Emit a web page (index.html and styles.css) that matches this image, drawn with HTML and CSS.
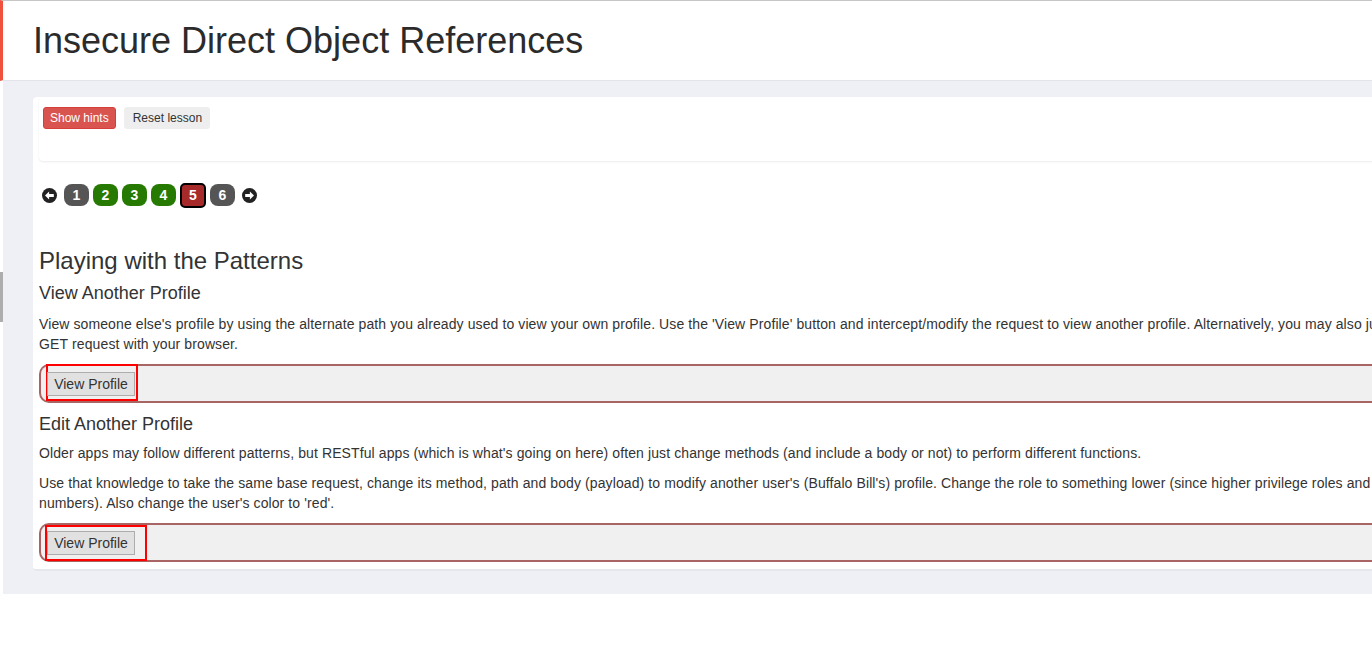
FILE: index.html
```html
<!DOCTYPE html>
<html lang="en">
<head>
    <meta charset="UTF-8">
    <title>Insecure Direct Object References</title>
    <link rel="stylesheet" href="styles.css">
</head>
<body>
    <div class="page">
        <!-- Lesson title -->
        <header class="lesson-header">
            <h1>Insecure Direct Object References</h1>
        </header>

        <div class="main">
            <div class="side">
                <span class="side-tab"></span>
            </div>

            <div class="content">
                <div class="lesson-card">
                    <div class="lesson-menu">
                        <button class="btn btn-hints">Show hints</button>
                        <button class="btn btn-reset">Reset lesson</button>
                    </div>

                    <!-- Page navigation -->
                    <div class="pager">
                        <span class="pager-arrow">
                            <svg viewBox="0 0 16 16" width="15" height="15">
                                <circle cx="8" cy="8" r="8" fill="#222"/>
                                <path d="M3.2 8 L7.6 3.8 L7.6 6.4 L12.6 6.4 L12.6 9.6 L7.6 9.6 L7.6 12.2 Z" fill="#fff"/>
                            </svg>
                        </span>
                        <span class="page-link done-no">1</span>
                        <span class="page-link done">2</span>
                        <span class="page-link done">3</span>
                        <span class="page-link done">4</span>
                        <span class="page-link current">5</span>
                        <span class="page-link done-no">6</span>
                        <span class="pager-arrow">
                            <svg viewBox="0 0 16 16" width="15" height="15">
                                <circle cx="8" cy="8" r="8" fill="#222"/>
                                <path d="M12.8 8 L8.4 3.8 L8.4 6.4 L3.4 6.4 L3.4 9.6 L8.4 9.6 L8.4 12.2 Z" fill="#fff"/>
                            </svg>
                        </span>
                    </div>

                    <div class="lesson-body">
                        <h2>Playing with the Patterns</h2>
                        <h3>View Another Profile</h3>
                        <p>View someone else's profile by using the alternate path you already used to view your own profile. Use the 'View Profile' button and intercept/modify the request to view another profile. Alternatively, you may also just use a manual GET&nbsp;request with your browser.</p>

                        <form class="attack-form">
                            <div class="highlight">
                                <button type="button" class="btn-plain">View Profile</button>
                            </div>
                        </form>

                        <h3>Edit Another Profile</h3>
                        <p>Older apps may follow different patterns, but RESTful apps (which is what's going on here) often just change methods (and include a body or not) to perform different functions.</p>
                        <p>Use that knowledge to take the same base request, change its method, path and body (payload) to modify another user's (Buffalo Bill's) profile. Change the role to something lower (since higher privilege roles and users are usually lower numbers). Also change the user's color to 'red'.</p>

                        <form class="attack-form last-form">
                            <div class="highlight highlight-wide">
                                <button type="button" class="btn-plain">View Profile</button>
                            </div>
                        </form>
                    </div>
                </div>
            </div>
        </div>
    </div>
</body>
</html>
```

FILE: styles.css
```css
/* General */
body {
    margin: 0;
    padding: 0;
    overflow: hidden;
    background-color: #fff;
    font-family: "Liberation Sans", Arial, sans-serif;
    color: #333;
}
.page {
    width: 1538px;
}
/* Title bar */
.lesson-header {
    border-top: 1px solid #c6c6c6;
    border-left: 3px solid #f0513f;
    border-bottom: 1px solid #e3e4e9;
    height: 79px;
    padding-left: 30px;
}
.lesson-header h1 {
    margin: 0;
    font-size: 36px;
    font-weight: 400;
    line-height: 79px;
    color: #2b2b2b;
}
/* Main area */
.main {
    display: flex;
}
.side {
    width: 3px;
    padding-top: 191px;
}
.side-tab {
    display: block;
    height: 50px;
    background-color: #adadad;
}
.content {
    flex: 1;
    background-color: #eff0f5;
    padding: 16px 0 23px 30px;
}
.lesson-card {
    background-color: #fff;
    border-radius: 4px;
    border-bottom: 2px solid #e6e7ec;
    padding: 0 6px 7px 6px;
}
.lesson-menu {
    height: 54px;
    padding: 10px 4px 0 4px;
    border-radius: 4px;
    box-shadow: 0 1px 2px rgba(0, 0, 0, 0.08);
    display: flex;
    align-items: flex-start;
    gap: 8px;
}
.btn {
    font-family: "Liberation Sans", Arial, sans-serif;
    font-size: 12px;
    height: 22px;
    padding: 0 6px;
    border: 1px solid transparent;
    border-radius: 3px;
}
.btn-hints {
    background-color: #d9534f;
    border-color: #d43f3a;
    color: #fff;
}
.btn-reset {
    background-color: #eeeeee;
    color: #333;
    padding: 0 7px 0 8px;
}
/* Pager */
.pager {
    display: flex;
    align-items: center;
    gap: 4px;
    margin: 23px 0 0 3px;
    height: 22px;
}
.pager-arrow {
    display: flex;
    width: 15px;
    height: 15px;
    margin-right: 3px;
}
.pager-arrow:last-child {
    margin: 0 0 0 3px;
}
.page-link {
    width: 25px;
    height: 22px;
    box-sizing: border-box;
    border-radius: 8px;
    color: #fff;
    font-size: 14px;
    font-weight: bold;
    text-align: center;
    line-height: 22px;
}
.done-no {
    background-color: #555;
}
.done {
    background-color: #267a02;
}
.current {
    width: 26px;
    height: 25px;
    background-color: #a62a2a;
    border: 2px solid #000;
    border-radius: 5px;
    line-height: 21px;
}
/* Lesson text */
.lesson-body h2 {
    font-size: 24px;
    font-weight: 400;
    line-height: 1.1;
    margin: 42px 0 10px 0;
}
.lesson-body h3 {
    font-size: 18px;
    font-weight: 400;
    line-height: 1.1;
    margin: 0 0 10px 0;
}
.attack-form + h3 {
    margin-bottom: 8px;
}
.lesson-body p {
    font-size: 14px;
    line-height: 20px;
    letter-spacing: 0.1px;
    margin: 0 0 10px 0;
}
.attack-form {
    display: flex;
    height: 35px;
    background-color: #f0f0f0;
    border: 2px solid #a96464;
    border-right: none;
    border-radius: 10px 0 0 10px;
    padding-left: 5px;
    margin: 0 0 12px 0;
}
.last-form {
    margin-bottom: 0;
}
.highlight {
    margin-top: -2px;
    height: 27px;
    width: 88px;
    border: 2px solid #ff0000;
    padding-top: 6px;
}
.highlight-wide {
    margin: 0 0 0 -1px;
    height: 28px;
    width: 97px;
    padding: 4px 0 0 1px;
}
.btn-plain {
    font-family: "Liberation Sans", Arial, sans-serif;
    font-size: 14px;
    color: #333;
    width: 88px;
    height: 24px;
    padding: 0;
    margin-left: -1px;
    background-color: #e1e1e1;
    border: 1px solid #adadad;
}
```
